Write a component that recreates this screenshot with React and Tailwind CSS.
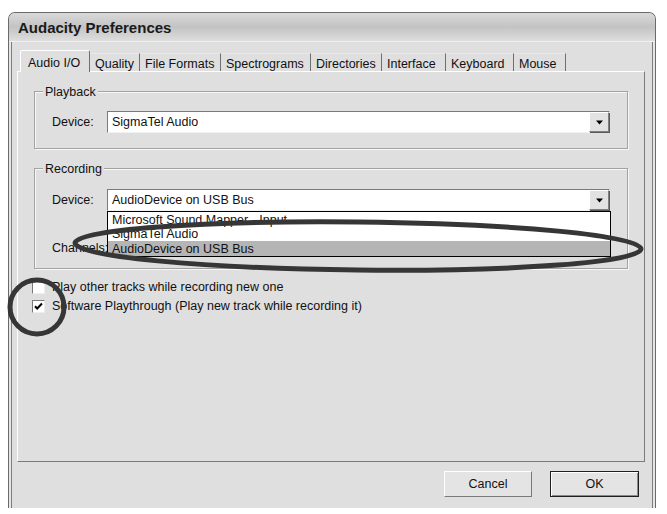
const tabs = [
  { label: 'Audio I/O', w: 'w-[70px]', active: true },
  { label: 'Quality', w: 'w-[50px]' },
  { label: 'File Formats', w: 'w-[81px]' },
  { label: 'Spectrograms', w: 'w-[90px]' },
  { label: 'Directories', w: 'w-[71px]' },
  { label: 'Interface', w: 'w-[64px]' },
  { label: 'Keyboard', w: 'w-[68px]' },
  { label: 'Mouse', w: 'w-[52px]' },
];

function Combo({ value }) {
  return (
    <div className="flex items-center w-[503px] h-[22px] bg-white border border-t-[#7a7a7a] border-l-[#7a7a7a] border-r-[#f2f2f2] border-b-[#f2f2f2]">
      <span className="flex-1 pl-[4px] leading-none">{value}</span>
      <div className="flex items-center justify-center w-[20px] h-[20px] bg-[#e2e2e2] border border-t-white border-l-white border-r-[#7f7f7f] border-b-[#7f7f7f] shadow-[1px_1px_0_#5a5a5a]">
        <svg width="9" height="5" viewBox="0 0 9 5">
          <path d="M1 0.5h7L4.5 4.5z" fill="#000" />
        </svg>
      </div>
    </div>
  );
}

function Group({ title, className, children }) {
  return (
    <div className={'relative ml-[16px] w-[594px] border border-[#a2a2a2] shadow-[inset_1px_1px_0_#f7f7f7,1px_1px_0_#f7f7f7] ' + className}>
      {/* caption sits on the top border */}
      <span className="absolute -top-[8px] left-[8px] px-[2px] bg-[#dfdfdf] leading-[16px]">{title}</span>
      {children}
    </div>
  );
}

function Check({ checked, label }) {
  return (
    <div className="flex items-center h-[19px] pl-[14px]">
      <div className="flex items-center justify-center w-[13px] h-[13px] bg-white border border-t-[#7a7a7a] border-l-[#7a7a7a] border-r-[#eeeeee] border-b-[#eeeeee]">
        {checked && (
          <svg width="9" height="9" viewBox="0 0 9 9">
            <path d="M1 4.2l2.2 2.3L8 1.5" fill="none" stroke="#000" strokeWidth="2" />
          </svg>
        )}
      </div>
      <span className="ml-[7px]">{label}</span>
    </div>
  );
}

export default function App() {
  return (
    <div className="relative w-[667px] h-[514px] overflow-hidden bg-white pt-[12px] pl-[8px] font-['Liberation_Sans',Arial,sans-serif] text-[12.5px] text-[#111]">
      <div className="w-[648px] h-[496px] flex flex-col border-x border-t border-[#6a6a6a] rounded-t-[7px] bg-[#e6e6e6]">
        {/* title bar */}
        <div className="h-[29px] shrink-0 flex items-center pl-[9px] rounded-t-[6px] bg-gradient-to-b from-[#d9d9d9] via-[#c3c3c3] to-[#dedede] border-b border-[#f0f0f0]">
          <span className="font-bold text-[15px] text-[#1a1a1a] mt-[2px]">Audacity Preferences</span>
        </div>

        {/* body */}
        <div className="flex-1 mx-[2px] border-x border-[#7d7d7d] bg-[#dfdfdf] px-[5px] pt-[8px] flex flex-col">
          <div className="flex items-end h-[21px] pl-[3px]">
            {tabs.map((t) =>
              t.active ? (
                <div
                  key={t.label}
                  className={'relative z-10 -mb-px h-[22px] pl-[7px] pt-[3px] bg-[#dfdfdf] border-t border-l border-white border-r border-r-[#6f6f6f] rounded-t-[2px] ' + t.w}
                >
                  {t.label}
                </div>
              ) : (
                <div
                  key={t.label}
                  className={'h-[18px] pl-[5px] pt-[1px] border-t border-[#e9e9e9] border-r border-r-[#6f6f6f] ' + t.w}
                >
                  {t.label}
                </div>
              )
            )}
          </div>

          {/* tab page */}
          <div className="h-[391px] w-[628px] border border-t-white border-l-white border-r-[#7a7a7a] border-b-[#7a7a7a] pt-[19px]">
            <Group title="Playback" className="h-[58px] pt-[19px]">
              <div className="flex items-center pl-[17px]">
                <span className="w-[55px]">Device:</span>
                <Combo value="SigmaTel Audio" />
              </div>
            </Group>

            <Group title="Recording" className="mt-[19px] h-[101px] pt-[20px]">
              <div className="relative flex items-center pl-[17px]">
                <span className="w-[55px]">Device:</span>
                <Combo value="AudioDevice on USB Bus" />
                {/* open dropdown list */}
                <div className="absolute left-[72px] top-[22px] z-10 w-[504px] pt-[1px] bg-white border border-black leading-[14px]">
                  <div className="h-[14px] pl-[4px]">Microsoft Sound Mapper - Input</div>
                  <div className="h-[14px] pl-[4px]">SigmaTel Audio</div>
                  <div className="h-[15px] pl-[4px] pt-[1px] bg-[#b5b5b5]">AudioDevice on USB Bus</div>
                </div>
              </div>
              <div className="flex items-center h-[22px] mt-[26px] pl-[17px]">
                <span>Channels:</span>
              </div>
            </Group>

            <div className="mt-[9px]">
              <Check label="Play other tracks while recording new one" />
              <Check checked label="Software Playthrough (Play new track while recording it)" />
            </div>
          </div>

          <div className="flex justify-end gap-[18px] mt-[9px] pr-[8px]">
            <button className="w-[88px] h-[26px] bg-[#e4e4e4] border border-t-white border-l-white border-r-[#7a7a7a] border-b-[#7a7a7a]">
              Cancel
            </button>
            <button className="w-[89px] h-[26px] bg-[#e4e4e4] border border-[#1e1e1e] shadow-[inset_1px_1px_0_#fff,inset_-1px_-1px_0_#8a8a8a]">
              OK
            </button>
          </div>
        </div>
      </div>

      {/* hand-drawn annotation marks */}
      <svg className="absolute inset-0 pointer-events-none z-20" width="667" height="514" viewBox="0 0 667 514">
        <ellipse cx="358" cy="246" rx="283" ry="24" transform="rotate(0.6 358 246)" fill="none" stroke="#363636" strokeWidth="5" />
        <circle cx="37" cy="307" r="27" fill="none" stroke="#363636" strokeWidth="5" />
      </svg>
    </div>
  );
}
